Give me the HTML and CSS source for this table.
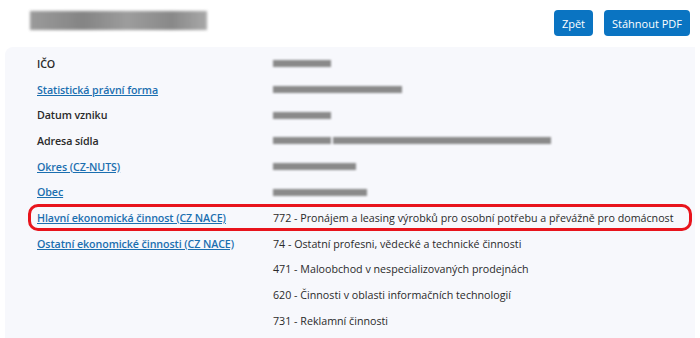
FILE: index.html
```html
<!DOCTYPE html>
<html lang="cs">
<head>
<meta charset="utf-8">
<link rel="stylesheet" href="styles.css">
</head>
<body>
<header class="top">
  <div class="title-blur"></div>
  <div class="actions">
    <button class="btn">Zpět</button>
    <button class="btn">Stáhnout PDF</button>
  </div>
</header>
<main class="panel">
  <div class="row"><div class="label">IČO</div><div class="value"><span class="blur" style="width:58px"></span></div></div>
  <div class="row"><div class="label"><a href="#">Statistická právní forma</a></div><div class="value"><span class="blur" style="width:129px"></span></div></div>
  <div class="row"><div class="label">Datum vzniku</div><div class="value"><span class="blur" style="width:58px"></span></div></div>
  <div class="row"><div class="label">Adresa sídla</div><div class="value"><span class="blur" style="width:58px"></span><span class="blur" style="width:218px"></span></div></div>
  <div class="row"><div class="label"><a href="#">Okres (CZ-NUTS)</a></div><div class="value"><span class="blur" style="width:83px"></span></div></div>
  <div class="row"><div class="label"><a href="#">Obec</a></div><div class="value"><span class="blur" style="width:94px"></span></div></div>
  <div class="row highlight"><div class="label"><a href="#">Hlavní ekonomická činnost (CZ NACE)</a></div><div class="value">772 - Pronájem a leasing výrobků pro osobní potřebu a převážně pro domácnost</div></div>
  <div class="row"><div class="label"><a href="#">Ostatní ekonomické činnosti (CZ NACE)</a></div><div class="value">74 - Ostatní profesni, vědecké a technické činnosti</div></div>
  <div class="row"><div class="label"></div><div class="value">471 - Maloobchod v nespecializovaných prodejnách</div></div>
  <div class="row"><div class="label"></div><div class="value">620 - Činnosti v oblasti informačních technologií</div></div>
  <div class="row"><div class="label"></div><div class="value">731 - Reklamní činnosti</div></div>
</main>
</body>
</html>
```
FILE: styles.css
```css
* { box-sizing: border-box; }
html, body { margin: 0; padding: 0; background: #fff; }
body {
  font-family: "Open Sans", "Noto Sans", sans-serif;
  font-size: 10.7px;
  color: #2a2a2a;
  width: 700px;
  height: 338px;
  overflow: hidden;
}
.top {
  display: flex;
  justify-content: space-between;
  align-items: flex-start;
  padding: 10px 10px 0 30px;
  height: 47px;
}
.title-blur {
  width: 177px;
  height: 19px;
  margin-top: 1px;
  background: linear-gradient(90deg, #8a8a8a, #6f6f6f 30%, #8c8c8c 55%, #747474 80%, #9a9a9a);
  filter: blur(1.5px);
  opacity: 0.85;
}
.actions {
  display: flex;
  gap: 11px;
  background: #fff;
  padding-left: 32px;
  padding-bottom: 11px;
  position: relative;
  z-index: 1;
}
.btn {
  font-family: inherit;
  font-size: 11px;
  color: #fff;
  background: #0a74c2;
  border: none;
  border-radius: 4px;
  height: 26px;
  padding: 0 8px;
}
.panel {
  margin-left: 5px;
  margin-right: 5px;
  background: #f7f8fc;
  border-top-left-radius: 8px;
  padding: 4px 0 8px 32px;
  height: 291px;
}
.row {
  display: grid;
  grid-template-columns: 236px 1fr;
  align-items: center;
  height: 25.7px;
  position: relative;
}
.label { font-weight: 600; letter-spacing: -0.1px; }
.label a { color: #1b6fb0; }
.value { display: flex; align-items: center; gap: 2px; }
.blur {
  display: inline-block;
  height: 7px;
  background: #8a8a8a;
  filter: blur(1px);
}
.highlight::before {
  content: "";
  position: absolute;
  left: -9px;
  right: 3px;
  top: -1px;
  bottom: 0;
  border: 3px solid #e8141c;
  border-radius: 10px;
}
```
